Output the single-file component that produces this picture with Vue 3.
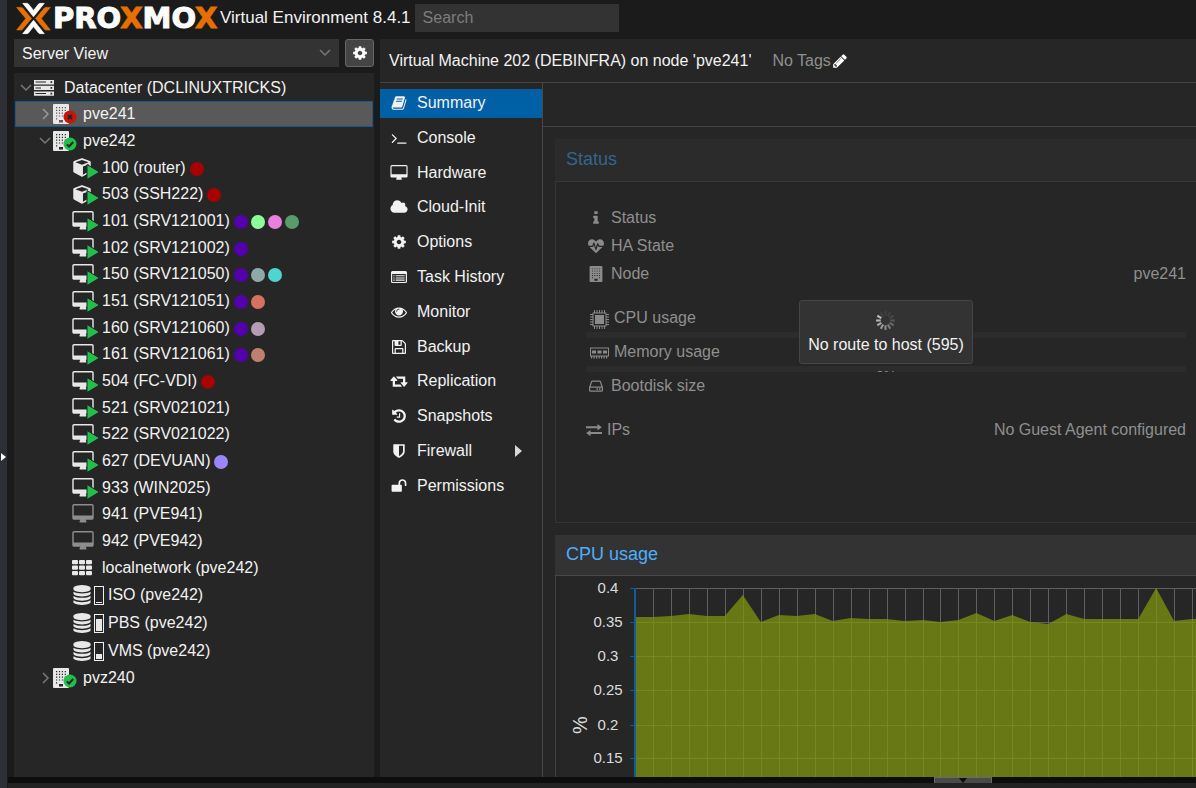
<script setup>
import { ref } from 'vue'

const icons = {
  cog: { vb: '0 0 1792 1792', d: 'M1152 896q0-106-75-181t-181-75-181 75-75 181 75 181 181 75 181-75 75-181zm512-109v222q0 12-8 23t-20 13l-185 28q-19 54-39 91 35 50 107 138 10 12 10 25t-9 23q-27 37-99 108t-94 71q-12 0-26-9l-138-108q-44 23-91 38-16 136-29 186-7 28-36 28h-222q-14 0-24.500-8.500t-11.500-21.500l-28-184q-49-16-90-37l-141 107q-10 9-25 9-14 0-25-11-126-114-165-168-7-10-7-23 0-12 8-23 15-21 51-66.500t54-70.500q-27-50-41-99l-183-27q-13-2-21-12.500t-8-23.500v-222q0-12 8-23t19-13l186-28q14-46 39-92-40-57-107-138-10-12-10-24 0-10 9-23 26-36 98.500-107.500t94.500-71.500q13 0 26 10l138 107q44-23 91-38 16-136 29-186 7-28 36-28h222q14 0 24.500 8.500t11.500 21.500l28 184q49 16 90 37l142-107q9-9 24-9 13 0 25 10 129 119 165 170 7 8 7 22 0 12-8 23-15 21-51 66.500t-54 70.500q26 50 41 98l183 28q13 2 21 12.500t8 23.500z' },
  book: { vb: '0 0 1792 1792', d: 'M1703 478q40 57 18 129l-275 906q-19 64-76.500 107.500t-122.500 43.500h-923q-77 0-148.500-53.500t-99.500-131.500q-24-67-2-127 0-4 3-27t4-37q1-8-3-21.500t-3-19.500q2-11 8-21t16.500-23.500 16.500-23.500q23-38 45-91.500t30-91.500q3-10 .5-30t-.5-28q3-11 17-28t17-23q21-36 42-92t25-90q1-9-2.500-32t.5-28q4-13 22-30.500t22-22.500q19-26 42.500-84.500t27.500-96.500q1-8-3-25.500t-2-26.500q2-8 9-18t18-23 17-21q8-12 16.500-30.500t15-35 16-36 19.500-32 26.500-23.500 36-11.500 47.500 5.500l-1 3q38-9 51-9h761q74 0 114 56t18 130l-274 906q-36 119-71.500 153.500t-128.500 34.500h-869q-27 0-38 15-11 16-1 43 24 70 144 70h923q29 0 56-15.500t35-41.500l300-987q7-22 5-57 38 15 59 43zm-1064 2q-4 13 2 22.500t20 9.500h608q13 0 25.500-9.500t16.500-22.500l21-64q4-13-2-22.500t-20-9.500h-608q-13 0-25.500 9.500t-16.500 22.500zm-83 256q-4 13 2 22.500t20 9.500h608q13 0 25.500-9.500t16.500-22.500l21-64q4-13-2-22.500t-20-9.500h-608q-13 0-25.500 9.500t-16.500 22.500z' },
  terminal: { vb: '0 0 1792 1792', d: 'M649 983l-466 466q-10 10-23 10t-23-10l-50-50q-10-10-10-23t10-23l393-393-393-393q-10-10-10-23t10-23l50-50q10-10 23-10t23 10l466 466q10 10 10 23t-10 23zm1079 457v64q0 14-9 23t-23 9h-960q-14 0-23-9t-9-23v-64q0-14 9-23t23-9h960q14 0 23 9t9 23z' },
  desktop: { vb: '0 0 1920 1792', d: 'M1792 992v-832q0-13-9.500-22.500t-22.500-9.500h-1600q-13 0-22.500 9.500t-9.500 22.500v832q0 13 9.500 22.500t22.500 9.500h1600q13 0 22.500-9.500t9.500-22.500zm128-832v1088q0 66-47 113t-113 47h-544q0 37 16 77.500t32 71 16 43.500q0 26-19 45t-45 19h-512q-26 0-45-19t-19-45q0-14 16-44t32-70 16-78h-544q-66 0-113-47t-47-113v-1088q0-66 47-113t113-47h1600q66 0 113 47t47 113z' },
  cloud: { vb: '0 0 2048 1792', d: 'M1984 1152q0 159-112.500 271.500t-271.500 112.500h-1088q-185 0-316.500-131.500t-131.500-316.500q0-132 71-241.500t187-163.500q-2-28-2-43 0-212 150-362t362-150q158 0 286.500 88t187.500 230q70-62 166-62 106 0 181 75t75 181q0 75-41 138 129 30 213 134.500t84 239.500z' },
  tasks: { vb: '0 0 16 16', d: 'M1.500 2H14.500Q16 2 16 3.500V12.500Q16 14 14.500 14H1.500Q0 14 0 12.500V3.500Q0 2 1.500 2ZM1.200 5V12.500Q1.200 12.900 1.600 12.900H14.400Q14.800 12.900 14.800 12.500V5ZM2.300 6.200H3.600V7.300H2.300ZM4.600 6.200H13.700V7.300H4.600ZM2.300 8.400H3.600V9.500H2.300ZM4.600 8.400H13.700V9.500H4.600ZM2.300 10.600H3.600V11.700H2.300ZM4.600 10.600H13.700V11.700H4.600Z' },
  eye: { vb: '0 0 1792 1792', d: 'M1664 960q-152-236-381-353 61 104 61 225 0 185-131.500 316.500t-316.500 131.500-316.500-131.500-131.500-316.500q0-121 61-225-229 117-381 353 133 205 333.500 326.500t434.500 121.500 434.500-121.500 333.500-326.500zm-720-384q0-20-14-34t-34-14q-125 0-214.500 89.500t-89.500 214.500q0 20 14 34t34 14 34-14 14-34q0-86 61-147t147-61q20 0 34-14t14-34zm848 384q0 34-20 69-140 230-376.500 368.500t-499.500 138.500-499.500-139-376.500-368q-20-35-20-69t20-69q140-229 376.500-368t499.500-139 499.500 139 376.500 368q20 35 20 69z' },
  floppy: { vb: '0 0 16 16', d: 'M2 1H10.800Q11.600 1 12.300 1.700L14.300 3.700Q15 4.400 15 5.200V14Q15 15 14 15H2Q1 15 1 14V2Q1 1 2 1ZM2.200 2.200V13.800H3.600V10Q3.600 9 4.600 9H11.400Q12.400 9 12.400 10V13.800H13.800V5.300Q13.800 4.900 13.400 4.500L11.500 2.600Q11.200 2.300 10.800 2.200V5.900Q10.800 6.900 9.800 6.900H4.600Q3.600 6.900 3.600 5.900V2.200ZM7.400 2.200V5.700H9.500V2.200ZM4.800 10.200V13.800H11.200V10.200Z' },
  retweet: { vb: '0 0 1920 1792', d: 'M1280 1504q0 13-9.500 22.500t-22.500 9.500h-960q-8 0-13.500-2t-9-7-5.500-8-3-11.500-1-11.500v-600h-192q-26 0-45-19t-19-45q0-24 15-41l320-384q19-22 49-22t49 22l320 384q15 17 15 41 0 26-19 45t-45 19h-192v384h576q16 0 25 11l160 192q7 10 7 21zm640-416q0 24-15 41l-320 384q-20 23-49 23t-49-23l-320-384q-15-17-15-41 0-26 19-45t45-19h192v-384h-576q-16 0-25-12l-160-192q-7-9-7-20 0-13 9.500-22.500t22.500-9.500h960q8 0 13.500 2t9 7 5.500 8 3 11.500 1 11.500v600h192q26 0 45 19t19 45z' },
  history: { vb: '0 0 1792 1792', d: 'M1664 896q0 156-61 298t-164 245-245 164-298 61q-172 0-327-72.500t-264-204.500q-7-10-6.500-22.500t8.500-20.500l137-138q10-9 25-9 16 2 23 12 73 95 179 147t225 52q104 0 198.500-40.500t163.500-109.500 109.500-163.500 40.500-198.500-40.500-198.500-109.500-163.500-163.500-109.500-198.500-40.500q-98 0-188 35.500t-160 101.500l137 138q31 30 14 69-17 40-59 40h-448q-26 0-45-19t-19-45v-448q0-42 40-59 39-17 69 14l130 129q107-101 244.500-156.500t284.500-55.500q156 0 298 61t245 164 164 245 61 298zm-640-288v448q0 14-9 23t-23 9h-320q-14 0-23-9t-9-23v-64q0-14 9-23t23-9h224v-352q0-14 9-23t23-9h64q14 0 23 9t9 23z' },
  shield: { vb: '0 0 1792 1792', d: 'M1344 960v-640h-448v1137q119-63 213-137 235-184 235-360zm192-768v768q0 86-33.500 170.500t-83 150-118 127.500-126.500 103-121 77.500-89.500 49.500-42.500 20q-12 6-26 6t-26-6q-16-7-42.500-20t-89.500-49.500-121-77.500-126.500-103-118-127.500-83-150-33.500-170.500v-768q0-26 19-45t45-19h1152q26 0 45 19t19 45z' },
  unlock: { vb: '0 0 1792 1792', d: 'M1728 576v256q0 26-19 45t-45 19h-64q-26 0-45-19t-19-45v-256q0-106-75-181t-181-75-181 75-75 181v192h96q40 0 68 28t28 68v576q0 40-28 68t-68 28h-960q-40 0-68-28t-28-68v-576q0-40 28-68t68-28h672v-192q0-185 131.500-316.500t316.500-131.500 316.500 131.500 131.500 316.500z' },
  pencil: { vb: '0 0 1792 1792', d: 'M491 1536l91-91-235-235-91 91v107h128v128h107zm523-928q0-22-22-22-10 0-17 7l-542 542q-7 7-7 17 0 22 22 22 10 0 17-7l542-542q7-7 7-17zm-54-192l416 416-832 832h-416v-416zm683 96q0 53-37 90l-166 166-416-416 166-165q36-38 90-38 53 0 91 38l235 234q37 39 37 91z' },
  info: { vb: '0 0 1792 1792', d: 'M1216 1344v128q0 26-19 45t-45 19h-512q-26 0-45-19t-19-45v-128q0-26 19-45t45-19h64v-384h-64q-26 0-45-19t-19-45v-128q0-26 19-45t45-19h384q26 0 45 19t19 45v576h64q26 0 45 19t19 45zm-128-1152v192q0 26-19 45t-45 19h-256q-26 0-45-19t-19-45v-192q0-26 19-45t45-19h256q26 0 45 19t19 45z' },
  heartbeat: { vb: '0 0 16 16', d: 'M11.200 8.900H14.500L8.500 14.700Q8 15.100 7.500 14.700L1.500 8.900H4.700Q5.100 8.900 5.300 8.500L5.900 7 7.300 11.600Q7.500 12.100 7.900 12.100T8.400 11.700L9.800 7.400 10.400 8.500Q10.700 8.900 11.200 8.900ZM16 5.500Q16 6.700 15.300 7.800H11.500L10.200 5.400Q10 5 9.600 5.100T9.100 5.500L7.900 9.400 6.500 4.900Q6.300 4.400 5.900 4.400T5.300 4.800L4.300 7.800H.7Q0 6.700 0 5.500 0 3.500 1.100 2.400T4.300 1.200Q5.700 1.200 8 3.500 10.300 1.200 11.700 1.200 13.800 1.200 14.900 2.400T16 5.500Z' },
  building: { vb: '0 0 16 20', d: 'M1 0H15Q16 0 16 1V19Q16 20 15 20H1Q0 20 0 19V1Q0 0 1 0ZM3 3V4.200H4.200V3ZM5.900 3V4.200H7.100V3ZM8.800 3V4.200H10V3ZM11.700 3V4.200H12.900V3ZM3 5.800V7H4.200V5.800ZM5.900 5.800V7H7.100V5.800ZM8.800 5.800V7H10V5.800ZM11.700 5.800V7H12.900V5.800ZM3 8.600V9.800H4.200V8.600ZM5.900 8.600V9.800H7.100V8.600ZM8.800 8.600V9.800H10V8.600ZM11.700 8.600V9.800H12.900V8.600ZM3 11.400V12.600H4.200V11.400ZM5.900 11.400V12.600H7.100V11.400ZM8.800 11.400V12.600H10V11.400ZM11.700 11.400V12.600H12.900V11.400ZM3 14.200V15.400H4.200V14.200ZM11.700 14.200V15.400H12.900V14.200ZM6 16V18.500H10V16Z' },
  server: { vb: '0 0 20 16', d: 'M0 0H20V4.400H0ZM1.500 1.600V2.600H12V1.600ZM16.500 1.300V2.900H18.200V1.300ZM0 5.700H20V10.100H0ZM1.500 7.400V8.400H7V7.400ZM16.500 7.100V8.700H18.200V7.100ZM0 11.400H20V15.800H0ZM1.500 13.100V14.100H12V13.100ZM16.500 12.800V14.400H18.200V12.800Z' },
  cube: { vb: '0 0 20 20', d: 'M9.500 .3Q10 .1 10.500 .3L18.300 3.200Q19.200 3.600 19.200 4.600V14Q19.200 14.900 18.400 15.300L10.700 19.500Q10 19.900 9.300 19.500L1.500 15.300Q.8 14.900 .8 14V4.600Q.8 3.600 1.700 3.200ZM10 2L3 4.600 10 7.200 17 4.600ZM11 9V17.500L17.500 14V6.500Z' },
  th: { vb: '0 0 20 16', d: 'M1 0H5Q6 0 6 1V3.300Q6 4.300 5 4.300H1Q0 4.300 0 3.300V1Q0 0 1 0ZM8 0H12Q13 0 13 1V3.300Q13 4.300 12 4.300H8Q7 4.300 7 3.300V1Q7 0 8 0ZM15 0H19Q20 0 20 1V3.300Q20 4.300 19 4.300H15Q14 4.300 14 3.300V1Q14 0 15 0ZM1 5.500H5Q6 5.500 6 6.500V8.800Q6 9.800 5 9.800H1Q0 9.800 0 8.800V6.500Q0 5.500 1 5.500ZM8 5.500H12Q13 5.500 13 6.500V8.800Q13 9.800 12 9.800H8Q7 9.800 7 8.800V6.500Q7 5.500 8 5.500ZM15 5.500H19Q20 5.500 20 6.500V8.800Q20 9.800 19 9.800H15Q14 9.800 14 8.800V6.500Q14 5.500 15 5.500ZM1 11H5Q6 11 6 12V14.300Q6 15.300 5 15.300H1Q0 15.300 0 14.300V12Q0 11 1 11ZM8 11H12Q13 11 13 12V14.300Q13 15.300 12 15.300H8Q7 15.300 7 14.300V12Q7 11 8 11ZM15 11H19Q20 11 20 12V14.300Q20 15.300 19 15.300H15Q14 15.300 14 14.300V12Q14 11 15 11Z' },
  database: { vb: '0 0 1792 1792', d: 'M896 768q237 0 443-43t325-127v170q0 69-103 128t-280 93.500-385 34.500-385-34.500-280-93.500-103-128v-170q119 84 325 127t443 43zm0 768q237 0 443-43t325-127v170q0 69-103 128t-280 93.500-385 34.500-385-34.500-280-93.500-103-128v-170q119 84 325 127t443 43zm0-384q237 0 443-43t325-127v170q0 69-103 128t-280 93.500-385 34.500-385-34.500-280-93.500-103-128v-170q119 84 325 127t443 43zm0-1152q208 0 385 34.500t280 93.500 103 128v128q0 69-103 128t-280 93.500-385 34.500-385-34.500-280-93.500-103-128v-128q0-69 103-128t280-93.500 385-34.500z' },
  cpu: { vb: '0 0 19 19', d: 'M3 2.500H16Q16.500 2.500 16.500 3V16Q16.500 16.500 16 16.500H3Q2.500 16.500 2.500 16V3Q2.500 2.500 3 2.500ZM3.500 3.500V15.500H15.500V3.500ZM5 5H14V14H5ZM4 0H5V2.500H4ZM6.500 0H7.500V2.500H6.500ZM9 0H10V2.500H9ZM11.500 0H12.500V2.500H11.500ZM14 0H15V2.500H14ZM4 16.500H5V19H4ZM6.500 16.500H7.500V19H6.500ZM9 16.500H10V19H9ZM11.500 16.500H12.500V19H11.500ZM14 16.500H15V19H14ZM0 4H2.500V5H0ZM0 6.500H2.500V7.500H0ZM0 9H2.500V10H0ZM0 11.500H2.500V12.500H0ZM0 14H2.500V15H0ZM16.500 4H19V5H16.500ZM16.500 6.500H19V7.500H16.500ZM16.500 9H19V10H16.500ZM16.500 11.500H19V12.500H16.500ZM16.500 14H19V15H16.500Z' },
  memory: { vb: '0 0 19 12', d: 'M0 0H19V9H0ZM1 1V8H18V1ZM2 3H6V6H2ZM7.500 3H11.500V6H7.500ZM13 3H17V6H13ZM1 9H2.200V11H1ZM3.500 9H4.700V11H3.500ZM6 9H7.200V11H6ZM8.500 9H9.700V11H8.500ZM11 9H12.200V11H11ZM13.500 9H14.700V11H13.500ZM16 9H17.200V11H16Z' },
  hdd: { vb: '0 0 16 16', d: 'M4.500 2.500H11.500Q12.700 2.500 13 3.600L14.700 8.600Q15 9.300 15 10V12.200Q15 13.700 13.500 13.700H2.500Q1 13.700 1 12.200V10Q1 9.300 1.300 8.600L3 3.600Q3.300 2.500 4.500 2.500ZM4.600 3.700Q4.200 3.700 4.100 4.100L2.600 8.500H13.400L11.900 4.100Q11.800 3.700 11.400 3.700ZM2.200 9.700V12.200Q2.200 12.500 2.600 12.500H13.400Q13.800 12.500 13.800 12.200V9.700ZM8.500 10.300H10V11.800H8.500ZM11 10.300H12.500V11.800H11Z' },
  exchange: { vb: '0 0 16 16', d: 'M0 4.200H11.500V2L15.800 5.200 11.500 8.400V6.200H0ZM16 10H4.500V7.900L.2 11.100 4.500 14.300V12.100H16Z' }
}

const purple = '#5400ad'
const red = '#a80000'
const tree = [
  { depth: 0, icon: 'server', label: 'Datacenter (DCLINUXTRICKS)', arrow: 'down' },
  { depth: 1, icon: 'building', label: 'pve241', arrow: 'right', state: 'bad', selected: true },
  { depth: 1, icon: 'building', label: 'pve242', arrow: 'down', state: 'ok' },
  { depth: 2, icon: 'cube', label: '100 (router)', state: 'run', tags: [red] },
  { depth: 2, icon: 'cube', label: '503 (SSH222)', state: 'run', tags: [red] },
  { depth: 2, icon: 'desktop', label: '101 (SRV121001)', state: 'run', tags: [purple, '#8cff98', '#e980dc', '#5b9a6c'] },
  { depth: 2, icon: 'desktop', label: '102 (SRV121002)', state: 'run', tags: [purple] },
  { depth: 2, icon: 'desktop', label: '150 (SRV121050)', state: 'run', tags: [purple, '#8fa8a8', '#4fd5d0'] },
  { depth: 2, icon: 'desktop', label: '151 (SRV121051)', state: 'run', tags: [purple, '#d8705f'] },
  { depth: 2, icon: 'desktop', label: '160 (SRV121060)', state: 'run', tags: [purple, '#b49db0'] },
  { depth: 2, icon: 'desktop', label: '161 (SRV121061)', state: 'run', tags: [purple, '#c0806f'] },
  { depth: 2, icon: 'desktop', label: '504 (FC-VDI)', state: 'run', tags: [red] },
  { depth: 2, icon: 'desktop', label: '521 (SRV021021)', state: 'run' },
  { depth: 2, icon: 'desktop', label: '522 (SRV021022)', state: 'run' },
  { depth: 2, icon: 'desktop', label: '627 (DEVUAN)', state: 'run', tags: ['#9b85ff'] },
  { depth: 2, icon: 'desktop', label: '933 (WIN2025)', state: 'run' },
  { depth: 2, icon: 'desktop', label: '941 (PVE941)', off: true },
  { depth: 2, icon: 'desktop', label: '942 (PVE942)', off: true },
  { depth: 2, icon: 'th', label: 'localnetwork (pve242)' },
  { depth: 2, icon: 'database', label: 'ISO (pve242)', usage: 4 },
  { depth: 2, icon: 'database', label: 'PBS (pve242)', usage: 80 },
  { depth: 2, icon: 'database', label: 'VMS (pve242)', usage: 30 },
  { depth: 1, icon: 'building', label: 'pvz240', arrow: 'right', state: 'ok' }
]

const nav = [
  ['book', 'Summary'], ['terminal', 'Console'], ['desktop', 'Hardware'], ['cloud', 'Cloud-Init'],
  ['cog', 'Options'], ['tasks', 'Task History'], ['eye', 'Monitor'], ['floppy', 'Backup'],
  ['retweet', 'Replication'], ['history', 'Snapshots'], ['shield', 'Firewall'], ['unlock', 'Permissions']
]
const active = ref('Summary')
const query = ref('')

const ticks = [
  ['0.4', 12], ['0.35', 46], ['0.3', 80], ['0.25', 114], ['0.2', 149], ['0.15', 182]
]
const samples = [41, 41, 40, 38, 40, 40, 19, 46, 39, 40, 38, 45, 42, 43, 43, 45, 44, 46, 44, 37, 45, 39, 46, 48, 38, 43, 43, 43, 43, 12, 45, 43, 43]
const step = 17.970
const originX = 79
const gridX = Array.from({ length: 33 }, (_, i) => Math.round(originX + i * step))
const area = `M${originX} 230 ` + samples.map((y, i) => `L${(originX + i * step).toFixed(1)} ${y}`).join(' ') + ` L${originX + 32 * step} 230Z`
const alphas = [.1, .1, .15, .25, .4, .55, .65, .75, .85, .95, 1, .1]
const spokes = alphas.map((alpha, i) => ({ angle: i * 30, alpha }))
</script>

<template>
  <div class="shell">
    <aside class="edge"><svg class="edge-arrow" viewBox="0 0 5 8"><path d="M0 0L5 4L0 8Z" /></svg></aside>
    <div class="app">
      <header class="top">
        <div class="brand">
          <svg class="mark" viewBox="48 4 104 98">
            <g fill="#e57000" stroke="#e57000" stroke-width="2" stroke-linejoin="round">
              <path d="M50 20H64Q66 20 68 22L94 53L68 84Q66 87 64 87H50L77 53Z" />
              <path d="M150 20H136Q134 20 132 22L106 53L132 84Q134 87 136 87H150L123 53Z" />
            </g>
            <g fill="#fff" stroke="#fff" stroke-width="2" stroke-linejoin="round">
              <path d="M68 8H80Q83 8 85 10L100 29L115 10Q117 8 120 8H132L100 48Z" />
              <path d="M68 98H80Q83 98 85 96L100 77L115 96Q117 98 120 98H132L100 58Z" />
            </g>
          </svg>
          <span class="word">PRO<i>X</i>MO<i>X</i></span>
        </div>
        <span class="version">Virtual Environment 8.4.1</span>
        <input v-model="query" class="search" type="text" placeholder="Search" aria-label="Search" />
      </header>

      <div class="work">
        <section class="left">
          <div class="view-row">
            <div class="view">
              <select aria-label="View"><option>Server View</option></select>
              <svg class="caret" viewBox="0 0 12 8"><path d="M1 1L6 6L11 1" /></svg>
            </div>
            <button class="gear" aria-label="Settings"><svg class="ico" :viewBox="icons.cog.vb"><path :d="icons.cog.d" /></svg></button>
          </div>
          <ul class="tree">
            <li v-for="n in tree" :key="n.label" class="node" :class="{ selected: n.selected, storage: n.usage, off: n.off }">
              <span class="indent" :style="{ width: n.depth * 19 + 'px' }"></span>
              <span class="arrow">
                <svg v-if="n.arrow === 'down'" class="down" viewBox="0 0 12 8"><path d="M1 1L6 6L11 1" /></svg>
                <svg v-if="n.arrow === 'right'" class="right" viewBox="0 0 8 12"><path d="M1 1L6 6L1 11" /></svg>
              </span>
              <span class="pic">
                <svg :class="['glyph', n.icon]" :viewBox="icons[n.icon].vb"><path fill-rule="evenodd" :d="icons[n.icon].d" /></svg>
                <svg v-if="n.state === 'run'" class="badge run" viewBox="0 0 14 16"><path d="M1 .5L13.500 8L1 15.500Z" /></svg>
                <svg v-if="n.state === 'ok'" class="badge dot ok" viewBox="0 0 14 14"><circle cx="7" cy="7" r="6.500" /><path d="M3.800 7.400L6 9.500L10.200 5" /></svg>
                <svg v-if="n.state === 'bad'" class="badge dot bad" viewBox="0 0 14 14"><circle cx="7" cy="7" r="6.500" /><path d="M5 5L9 9M9 5L5 9" /></svg>
                <span v-if="n.usage" class="usage"><span :style="{ height: n.usage + '%' }"></span></span>
              </span>
              <span class="label">{{ n.label }}</span>
              <span v-for="(t, i) in n.tags" :key="i" class="tag" :style="{ background: t }"></span>
            </li>
          </ul>
        </section>

        <main class="content">
          <div class="title">
            <h1>Virtual Machine 202 (DEBINFRA) on node 'pve241'</h1>
            <span class="notags">No Tags</span>
            <button class="edit" aria-label="Edit Tags"><svg class="ico" :viewBox="icons.pencil.vb"><path :d="icons.pencil.d" /></svg></button>
          </div>
          <div class="split">
            <nav class="nav">
              <button v-for="[icon, name] in nav" :key="name" :class="{ active: active === name }" @click="active = name">
                <svg class="nav-ico" :viewBox="icons[icon].vb"><path fill-rule="evenodd" :d="icons[icon].d" /></svg>
                <span>{{ name }}</span>
                <svg v-if="name === 'Firewall'" class="more" viewBox="0 0 7 12"><path d="M0 0L7 6L0 12Z" /></svg>
              </button>
            </nav>
            <div class="pane">
              <div class="toolbar"></div>
              <div class="cards">
                <section class="card status">
                  <h2>Status</h2>
                  <div class="facts">
                    <div class="fact"><svg class="fi" :viewBox="icons.info.vb"><path :d="icons.info.d" /></svg><span>Status</span></div>
                    <div class="fact"><svg class="fi" :viewBox="icons.heartbeat.vb"><path :d="icons.heartbeat.d" /></svg><span>HA State</span></div>
                    <div class="fact"><svg class="fi" :viewBox="icons.building.vb"><path fill-rule="evenodd" :d="icons.building.d" /></svg><span>Node</span><b>pve241</b></div>
                    <div class="fact spaced"><svg class="fi big" :viewBox="icons.cpu.vb"><path fill-rule="evenodd" :d="icons.cpu.d" /></svg><span>CPU usage</span></div>
                    <div class="meter"></div>
                    <div class="fact"><svg class="fi big" :viewBox="icons.memory.vb"><path fill-rule="evenodd" :d="icons.memory.d" /></svg><span>Memory usage</span></div>
                    <div class="meter">0%</div>
                    <div class="fact"><svg class="fi" :viewBox="icons.hdd.vb"><path fill-rule="evenodd" :d="icons.hdd.d" /></svg><span>Bootdisk size</span></div>
                    <div class="fact spaced"><svg class="fi flush" :viewBox="icons.exchange.vb"><path :d="icons.exchange.d" /></svg><span>IPs</span><b>No Guest Agent configured</b></div>
                  </div>
                  <div class="mask">
                    <div class="notice" role="alert">
                      <svg class="spinner" viewBox="-10 -10 20 20">
                        <path v-for="s in spokes" :key="s.angle" d="M0 -4.500V-9" :transform="`rotate(${s.angle})`" :opacity="s.alpha" />
                      </svg>
                      <span>No route to host (595)</span>
                    </div>
                  </div>
                </section>

                <section class="card cpu">
                  <h2>CPU usage</h2>
                  <svg class="chart" role="img" aria-label="CPU usage">
                    <g class="grid" shape-rendering="crispEdges">
                      <rect v-for="x in gridX" :key="x" :x="x" y="12" width="1" height="220" />
                      <rect v-for="t in ticks" :key="t[0]" :x="originX" :y="t[1]" width="700" height="1" />
                    </g>
                    <path class="area" :d="area" />
                    <g class="axis" shape-rendering="crispEdges">
                      <rect :x="originX - 1" y="12" width="2" height="220" />
                      <rect v-for="t in ticks" :key="t[0]" :x="originX - 5" :y="t[1]" width="5" height="1" />
                    </g>
                    <text v-for="t in ticks" :key="t[0]" x="52" :y="t[1] + 5" text-anchor="middle">{{ t[0] }}</text>
                    <text class="unit" transform="translate(31 149) rotate(-90)" text-anchor="middle">%</text>
                  </svg>
                </section>
              </div>
            </div>
          </div>
        </main>
      </div>

      <div class="splitter"><button class="collapse" aria-label="Collapse log"><svg viewBox="0 0 8 5"><path d="M0 0H8L4 5Z" /></svg></button></div>
      <footer class="log"></footer>
    </div>
  </div>
</template>

<style>
html, body { margin: 0; background: #1b1b1b; overflow: hidden; }
</style>

<style scoped>
.shell { display: flex; height: 100vh; overflow: hidden; font: 16px/20px "Liberation Sans", Arial, sans-serif; color: #f2f2f2; background: #1b1b1b; }
.shell * { box-sizing: border-box; }
button, input, select { font: inherit; color: inherit; border: 0; margin: 0; padding: 0; border-radius: 0; background: none; }
svg { display: block; flex: none; }
.edge { flex: none; display: flex; align-items: center; width: 8px; background: #2e2f36; border-right: 1px solid #1b1b1b; padding: 16vh 0 0 1px; }
.edge-arrow { width: 5px; height: 8px; fill: #fff; }
.app { flex: 1; min-width: 0; display: flex; flex-direction: column; }

.top { flex: none; display: flex; align-items: center; height: 39px; padding: 0 0 3px 8px; }
.brand { display: flex; align-items: center; width: 204px; flex: none; }
.mark { width: 35px; height: 33px; }
.word { margin-left: 2px; font: bold 29px/30px "DejaVu Sans", sans-serif; color: #fff; -webkit-text-stroke: 1px currentColor; }
.word i { font-style: normal; color: #e57000; }
.version { font-size: 17px; white-space: nowrap; }
.search { width: 204px; height: 28px; margin-left: 4px; padding: 0 8px; background: #333; outline: 0; }
.search::placeholder { color: #7d7d7d; opacity: 1; }

.work { flex: 1; min-height: 0; display: flex; gap: 6px; padding-left: 6px; }
.left { flex: none; width: 360px; display: flex; flex-direction: column; gap: 6px; }
.view-row { display: flex; gap: 6px; height: 28px; flex: none; }
.view { flex: 1; display: flex; align-items: center; background: #333; padding-right: 8px; }
.view select { flex: 1; height: 28px; appearance: none; padding: 2px 8px 0; outline: 0; }
.caret { width: 12px; height: 8px; }
.caret path, .arrow path { fill: none; stroke: #777; stroke-width: 1.500; }
.selected .arrow path { stroke: #999; }
.gear { display: flex; align-items: center; justify-content: center; width: 29px; height: 28px; background: #444; border: 1px solid #666; border-radius: 3px; }
.ico { width: 16px; height: 16px; fill: #fff; }

.tree { flex: 1; min-height: 0; margin: 0; padding: 1px; list-style: none; background: #262626; overflow: hidden; }
.node { display: flex; align-items: center; height: 27px; padding-left: 5px; white-space: nowrap; }
.node:nth-child(3n+2) { height: 26px; }
.node.storage { height: 28px; }
.node.selected { background: #595959; box-shadow: inset 0 0 0 1px #0f5a93; }
.indent { flex: none; }
.arrow { flex: none; width: 14px; }
.arrow .down { width: 12px; height: 8px; }
.arrow .right { width: 8px; height: 12px; margin-left: 3px; }
.pic { flex: none; position: relative; display: flex; align-items: center; gap: 2px; width: 30px; height: 20px; }
.storage .pic { width: 36px; }
.glyph { height: 20px; width: 22px; fill: #e8e8e8; }
.glyph.building { width: 16px; }
.glyph.server { width: 20px; height: 16px; }
.glyph.th { width: 20px; height: 16px; }
.glyph.cube { width: 20px; height: 19px; }
.glyph.database { width: 20px; }
.off .glyph { fill: #8d8d8d; }
.badge { position: absolute; }
.badge.run { left: 14px; top: 6px; width: 14px; height: 16px; }
.badge.run path { fill: #21bf4b; stroke: #262626; stroke-width: 1; }
.badge.dot { left: 10px; top: 6px; width: 14px; height: 14px; }
.badge.dot path { fill: none; stroke: #262626; stroke-width: 2; }
.badge.ok circle { fill: #21bf4b; }
.badge.bad circle { fill: #c8160c; }
.usage { display: flex; align-items: flex-end; width: 10px; height: 19px; padding: 1px; border: 1px solid #f0f0f0; }
.usage span { flex: 1; background: #e8e8e8; }
.tag { flex: none; width: 14px; height: 14px; margin: 2px 0 0 3px; border-radius: 50%; }
.label + .tag { margin-left: 4px; }

.content { flex: 1; min-width: 0; display: flex; flex-direction: column; background: #262626; }
.title { flex: none; display: flex; align-items: center; height: 44px; padding-left: 9px; border-bottom: 1px solid #444; white-space: nowrap; }
.title h1 { margin: 0; font: inherit; }
.notags { margin-left: 21px; color: #8f8f8f; }
.edit { margin-left: 1px; }
.split { flex: 1; min-height: 0; display: flex; }
.nav { flex: none; width: 163px; padding-top: 6px; border-right: 1px solid #484848; display: flex; flex-direction: column; }
.nav button { display: flex; align-items: center; gap: 8px; height: 29px; margin-bottom: 6px; padding: 0 0 2px 9px; text-align: left; }
.nav button:nth-child(5n+3) { margin-bottom: 5px; }
.nav .active { background: #0060a6; }
.nav-ico { width: 20px; height: 16px; fill: #f2f2f2; }
.more { width: 7px; height: 12px; margin: 0 20px 0 auto; fill: #d8d8d8; }
.pane { flex: 1; min-width: 0; display: flex; flex-direction: column; }
.toolbar { flex: none; height: 44px; border-bottom: 1px solid #444; }
.cards { flex: 1; min-height: 0; overflow: hidden; display: flex; flex-direction: column; gap: 12px; width: calc(100% + 21px); padding: 12px 0 0 12px; }
.card { flex: none; position: relative; border: 1px solid #414141; border-top: 0; }
.card h2 { height: 41px; margin: 0 -1px; padding: 0 11px; font: 18px/38px "Liberation Sans", Arial, sans-serif; color: #4daeff; background: #333; border-bottom: 1px solid #484848; }
.status { border-color: #353535; }
.status h2 { height: 43px; line-height: 40px; color: #34658c; background: #2b2b2b; border-bottom-color: #383838; }
.facts { padding: 22px 30px 78px; color: #8f8f8f; }
.fact { display: flex; align-items: center; height: 28px; }
.spaced { margin-top: 16px; }
.fact b { margin-left: auto; font-weight: normal; }
.fi { width: 20px; height: 16px; margin-right: 5px; fill: #8a8a8a; }
.fi.big { width: 19px; height: 19px; margin: 3px 5px 0 4px; }
.fi.flush { width: 16px; }
.meter { height: 6px; padding-top: 1px; overflow: hidden; background: #2c2c2c; font-size: 14px; line-height: 18px; text-align: center; }
.mask { position: absolute; inset: 0; padding-top: 2px; display: flex; align-items: center; justify-content: center; }
.notice { display: flex; flex-direction: column; align-items: center; gap: 4px; padding: 9px 8px 8px; background: #333; border: 1px solid #454545; border-radius: 3px; }
.spinner { width: 21px; height: 21px; }
.spinner path { stroke: #bbb; stroke-width: 2; fill: none; }
.cpu { flex: 1; min-height: 0; border-bottom: 0; }
.chart { width: 100%; height: 100%; overflow: hidden; }
.grid { fill: #606060; }
.area { fill: #7e940f; opacity: .75; }
.axis { fill: #0a5f9c; }
.chart text { font-size: 15px; fill: #dcdcdc; }
.chart .unit { font-size: 20px; }

.splitter { flex: none; display: flex; justify-content: flex-end; height: 6px; background: #0d0d0d; }
.collapse { display: flex; justify-content: center; align-items: center; width: 58px; height: 6px; margin-right: 204px; background: #4a4a4a; border: 1px solid #6a6a6a; border-bottom: 0; }
.collapse svg { width: 8px; height: 5px; fill: #0d0d0d; }
.log { flex: none; height: 5px; background: #232323; }
</style>
